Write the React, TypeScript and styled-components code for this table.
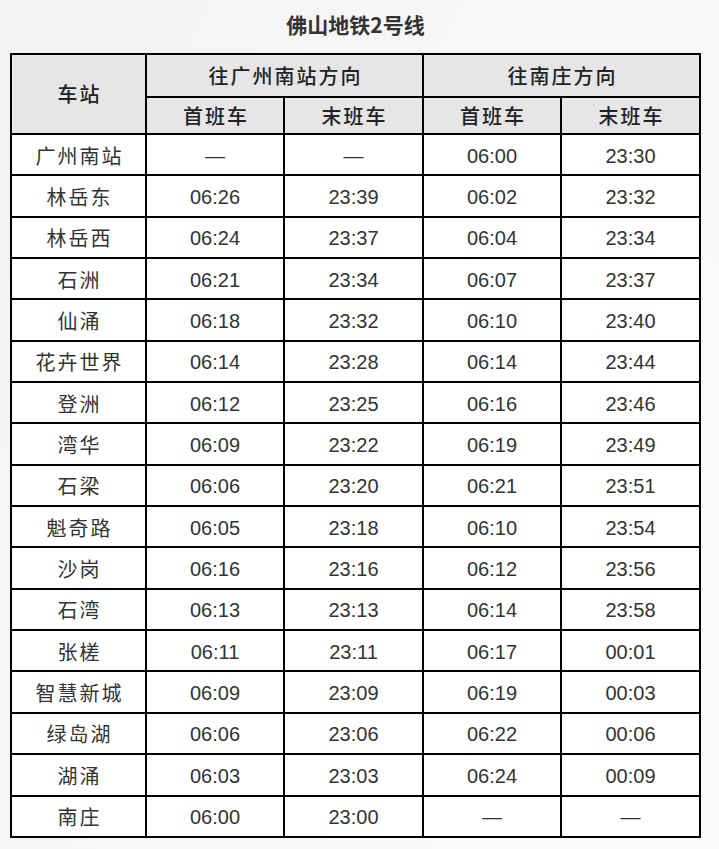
import React from "react";
import styled, { createGlobalStyle } from "styled-components";

const GlobalStyle = createGlobalStyle`
    html, body {
        margin: 0;
        padding: 0;
    }
    body {
        background: linear-gradient(115deg, #f3f1f1 0%, #f8f7f7 45%, #fbfbfb 100%);
        min-height: 849px;
        font-family: "Liberation Sans", "Noto Sans CJK SC", sans-serif;
    }
`;

const Page = styled.div`
    width: 719px;
    height: 849px;
    padding-left: 10px;
    box-sizing: border-box;
`;

const Title = styled.div`
    width: 691px;
    height: 53px;
    padding-bottom: 5px;
    box-sizing: border-box;
    display: flex;
    align-items: center;
    justify-content: center;
    font-family: "Noto Sans CJK SC", sans-serif;
    font-size: 21px;
    font-weight: 700;
    color: #333;
`;

const Table = styled.table`
    width: 691px;
    table-layout: fixed;
    border-collapse: collapse;
    border: 2px solid #000;
`;

const HeadCell = styled.th<{ $h: number }>`
    height: ${(p) => p.$h}px;
    padding: 0 0 0 2px;
    background: #e6e6e6;
    border: 2px solid #000;
    font-family: "Noto Sans CJK SC", sans-serif;
    font-size: 20px;
    font-weight: 500;
    letter-spacing: 2px;
    color: #222;
    text-align: center;
    vertical-align: middle;
    line-height: 1;
`;

const Row = styled.tr`
    height: 41.35px;
`;

const Cell = styled.td<{ $cjk?: boolean }>`
    padding: 2px 0 0 ${(p) => (p.$cjk ? 2 : 0)}px;
    background: #fff;
    border: 2px solid #000;
    font-family: ${(p) =>
        p.$cjk ? `"Noto Sans CJK SC", sans-serif` : `"Liberation Sans", "Noto Sans CJK SC", sans-serif`};
    font-size: 20px;
    letter-spacing: ${(p) => (p.$cjk ? 2 : 0)}px;
    color: #333;
    text-align: center;
    vertical-align: middle;
    line-height: 1;
`;

const rows: string[][] = [
    ["广州南站", "—", "—", "06:00", "23:30"],
    ["林岳东", "06:26", "23:39", "06:02", "23:32"],
    ["林岳西", "06:24", "23:37", "06:04", "23:34"],
    ["石洲", "06:21", "23:34", "06:07", "23:37"],
    ["仙涌", "06:18", "23:32", "06:10", "23:40"],
    ["花卉世界", "06:14", "23:28", "06:14", "23:44"],
    ["登洲", "06:12", "23:25", "06:16", "23:46"],
    ["湾华", "06:09", "23:22", "06:19", "23:49"],
    ["石梁", "06:06", "23:20", "06:21", "23:51"],
    ["魁奇路", "06:05", "23:18", "06:10", "23:54"],
    ["沙岗", "06:16", "23:16", "06:12", "23:56"],
    ["石湾", "06:13", "23:13", "06:14", "23:58"],
    ["张槎", "06:11", "23:11", "06:17", "00:01"],
    ["智慧新城", "06:09", "23:09", "06:19", "00:03"],
    ["绿岛湖", "06:06", "23:06", "06:22", "00:06"],
    ["湖涌", "06:03", "23:03", "06:24", "00:09"],
    ["南庄", "06:00", "23:00", "—", "—"],
];

export default function App() {
    return (
        <>
            <GlobalStyle />
            <Page>
                <Title>佛山地铁2号线</Title>
                <Table>
                    <colgroup>
                        <col style={{ width: 135 }} />
                        <col style={{ width: 138 }} />
                        <col style={{ width: 139 }} />
                        <col style={{ width: 138 }} />
                        <col style={{ width: 139 }} />
                    </colgroup>
                    <thead>
                        <tr>
                            <HeadCell $h={41} rowSpan={2}>车站</HeadCell>
                            <HeadCell $h={41} colSpan={2}>往广州南站方向</HeadCell>
                            <HeadCell $h={41} colSpan={2}>往南庄方向</HeadCell>
                        </tr>
                        <tr>
                            <HeadCell $h={35}>首班车</HeadCell>
                            <HeadCell $h={35}>末班车</HeadCell>
                            <HeadCell $h={35}>首班车</HeadCell>
                            <HeadCell $h={35}>末班车</HeadCell>
                        </tr>
                    </thead>
                    <tbody>
                        {rows.map((r) => (
                            <Row key={r[0]}>
                                {r.map((v, i) => (
                                    <Cell key={i} $cjk={i === 0}>{v}</Cell>
                                ))}
                            </Row>
                        ))}
                    </tbody>
                </Table>
            </Page>
        </>
    );
}
